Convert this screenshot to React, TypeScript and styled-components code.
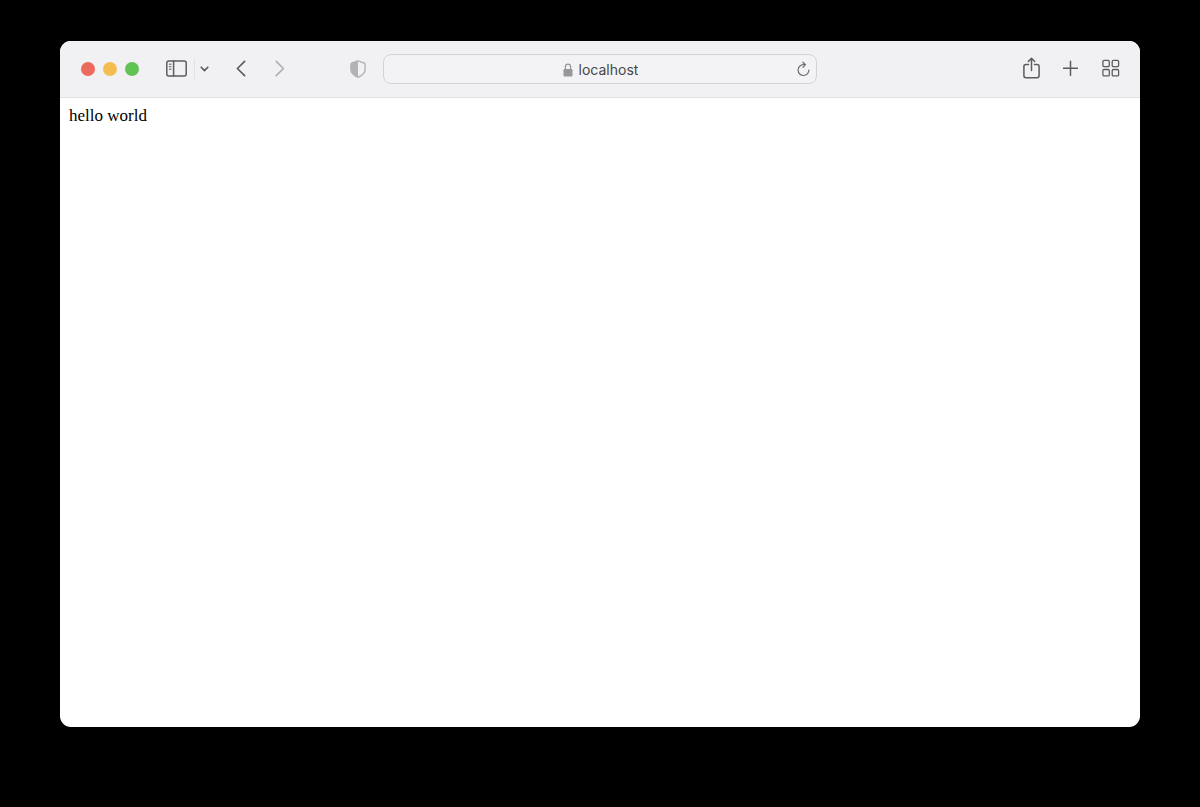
import React from "react";
import styled, { createGlobalStyle } from "styled-components";

const GlobalStyle = createGlobalStyle`
  *, *::before, *::after {
    box-sizing: border-box;
  }
  body {
    margin: 0;
    background: #000;
  }
`;

const Desktop = styled.div`
  display: flex;
  flex-direction: column;
  min-height: 100vh;
  padding: 41px 60px 80px;
  background: #000;
`;

const BrowserWindow = styled.section`
  display: flex;
  flex: 1;
  flex-direction: column;
  overflow: hidden;
  border-radius: 11px;
  background: #fff;
`;

const Toolbar = styled.header`
  display: grid;
  grid-template-columns: minmax(0, 1fr) minmax(0, 434px) minmax(0, 1fr);
  align-items: center;
  height: 57px;
  padding: 0 20px;
  border-bottom: 1px solid #e2e2e4;
  background: #f1f1f3;
`;

const ToolGroup = styled.div<{ $end?: boolean }>`
  display: flex;
  align-items: center;
  justify-content: ${(p) => (p.$end ? "flex-end" : "flex-start")};
  padding-bottom: ${(p) => (p.$end ? 2 : 0)}px;
`;

const TrafficLights = styled.div`
  display: flex;
  gap: 8px;
  padding-left: 1px;
  margin-right: 27px;
`;

const Light = styled.button<{ $color: string }>`
  width: 14px;
  height: 14px;
  padding: 0;
  border: 0;
  border-radius: 50%;
  background: ${(p) => p.$color};
`;

const ToolButton = styled.button<{ $color?: string; $before?: number }>`
  display: flex;
  flex: none;
  margin: 0 0 0 ${(p) => p.$before ?? 0}px;
  padding: 0;
  border: 0;
  background: none;
  color: ${(p) => p.$color ?? "#5c5c5e"};
`;

const Divider = styled.span`
  width: 1px;
  height: 20px;
  margin-left: 7px;
  background: #e1e1e3;
`;

const ShieldSlot = styled.div`
  display: flex;
  margin: 0 17px 0 auto;
`;

const AddressBar = styled.form`
  display: grid;
  grid-template-columns: 1fr auto 1fr;
  align-items: center;
  height: 30px;
  padding: 2px 6px 0;
  border: 1px solid #d3d3d5;
  border-radius: 8px;
  background: #f3f3f5;
`;

const Address = styled.label`
  display: flex;
  grid-column: 2;
  align-items: center;
  gap: 6px;
  padding-left: 1px;
  color: #97979a;
`;

const AddressInput = styled.input`
  field-sizing: content;
  height: 20px;
  padding: 0;
  border: 0;
  outline: 0;
  background: none;
  color: #464648;
  font: 14px/20px Inter, "Liberation Sans", sans-serif;
`;

const ReloadSlot = styled.div`
  display: flex;
  justify-content: flex-end;
  padding-bottom: 2px;
`;

const Page = styled.main`
  flex: 1;
  padding: 8px 9px;
  color: #000;
  font: 17px/20px "Liberation Serif", serif;
`;

type IconProps = {
  width: number;
  height: number;
  stroke?: number;
  children: React.ReactNode;
};

const Icon = ({ width, height, stroke = 1.5, children }: IconProps) => (
  <svg
    width={width}
    height={height}
    viewBox={`0 0 ${width} ${height}`}
    fill="none"
    stroke="currentColor"
    strokeWidth={stroke}
    strokeLinecap="round"
    strokeLinejoin="round"
    aria-hidden="true"
  >
    {children}
  </svg>
);

const lights = [
  { name: "Close", color: "#ec6a5e" },
  { name: "Minimize", color: "#f4bd50" },
  { name: "Zoom", color: "#61c354" },
];

export default function App() {
  return (
    <>
      <GlobalStyle />
      <Desktop>
        <BrowserWindow>
          <Toolbar>
            <ToolGroup>
              <TrafficLights>
                {lights.map((l) => (
                  <Light key={l.name} type="button" $color={l.color} aria-label={l.name} />
                ))}
              </TrafficLights>
              <ToolButton type="button" aria-label="Show sidebar">
                <Icon width={21} height={18}>
                  <rect x="0.8" y="0.9" width="19.4" height="15.2" rx="2" />
                  <path d="M7.6 1v15" />
                  <path d="M3.3 4.2h1.8M3.3 6.700h1.8M3.3 9.200h1.8" strokeWidth="1" />
                </Icon>
              </ToolButton>
              <Divider />
              <ToolButton type="button" aria-label="Tab groups" $before={5}>
                <Icon width={9} height={8} stroke={1.6}>
                  <path d="M1.2 2.2 4.5 5.6l3.3-3.4" />
                </Icon>
              </ToolButton>
              <ToolButton type="button" aria-label="Back" $before={27}>
                <Icon width={10} height={18} stroke={1.7}>
                  <path d="M8.6 1.300 1.4 8.500l7.2 7.200" />
                </Icon>
              </ToolButton>
              <ToolButton type="button" aria-label="Forward" $color="#b0b0b2" $before={29}>
                <Icon width={10} height={18} stroke={1.7}>
                  <path d="M1.200 1.300 8.400 8.500l-7.200 7.200" />
                </Icon>
              </ToolButton>
              <ShieldSlot>
                <ToolButton type="button" aria-label="Privacy report" $color="#b3b3b5">
                  <Icon width={16} height={18} stroke={1.4}>
                    <path d="M8 .9 14 3q1.1.4 1.1 1.5v5.2c0 3.3-2.9 5.6-7.1 7.6-4.2-2-7.1-4.3-7.1-7.6V4.500Q.9 3.400 2 3Z" />
                    <path
                      d="M8 .9v16.400c-4.200-2-7.100-4.300-7.100-7.600V4.500Q.9 3.400 2 3Z"
                      fill="currentColor"
                      stroke="none"
                    />
                  </Icon>
                </ToolButton>
              </ShieldSlot>
            </ToolGroup>

            <AddressBar onSubmit={(e) => e.preventDefault()}>
              <Address>
                <Icon width={10} height={14} stroke={1.3}>
                  <rect x="0.5" y="6" width="9" height="7.500" rx="1.200" fill="currentColor" stroke="none" />
                  <path d="M2.400 6.500V4a2.600 2.800 0 0 1 5.200 0v2.500" />
                </Icon>
                <AddressInput type="text" defaultValue="localhost" aria-label="Address" />
              </Address>
              <ReloadSlot>
                <ToolButton type="submit" aria-label="Reload" $color="#6d6d6f">
                  <Icon width={13} height={16} stroke={1.2}>
                    <path d="M7.500 3.700H6.500A5.400 5.400 0 1 0 11.900 9" />
                    <path d="M5.900 1.200 8.500 3.700 5.900 6.300" />
                  </Icon>
                </ToolButton>
              </ReloadSlot>
            </AddressBar>

            <ToolGroup $end>
              <ToolButton type="button" aria-label="Share">
                <Icon width={17} height={22}>
                  <path d="M5.500 7.500H3Q.9 7.500.9 9.600V18.600Q.9 20.700 3 20.700H14Q16.100 20.700 16.100 18.600V9.600Q16.100 7.500 14 7.500H11.500" />
                  <path d="M8.500 13.500V1.500M5.300 4.500 8.500 1.300l3.200 3.200" />
                </Icon>
              </ToolButton>
              <ToolButton type="button" aria-label="New tab" $before={23}>
                <Icon width={15} height={16}>
                  <path d="M7.500 1.300v14M.5 8.300h14" />
                </Icon>
              </ToolButton>
              <ToolButton type="button" aria-label="Tab overview" $before={24}>
                <Icon width={18} height={18} stroke={1.300}>
                  <rect x="0.900" y="1.300" width="6.400" height="6.400" rx="1.200" />
                  <rect x="10.200" y="1.300" width="6.400" height="6.400" rx="1.200" />
                  <rect x="0.900" y="10.500" width="6.400" height="6.400" rx="1.200" />
                  <rect x="10.200" y="10.500" width="6.400" height="6.400" rx="1.200" />
                </Icon>
              </ToolButton>
            </ToolGroup>
          </Toolbar>
          <Page>hello world</Page>
        </BrowserWindow>
      </Desktop>
    </>
  );
}
